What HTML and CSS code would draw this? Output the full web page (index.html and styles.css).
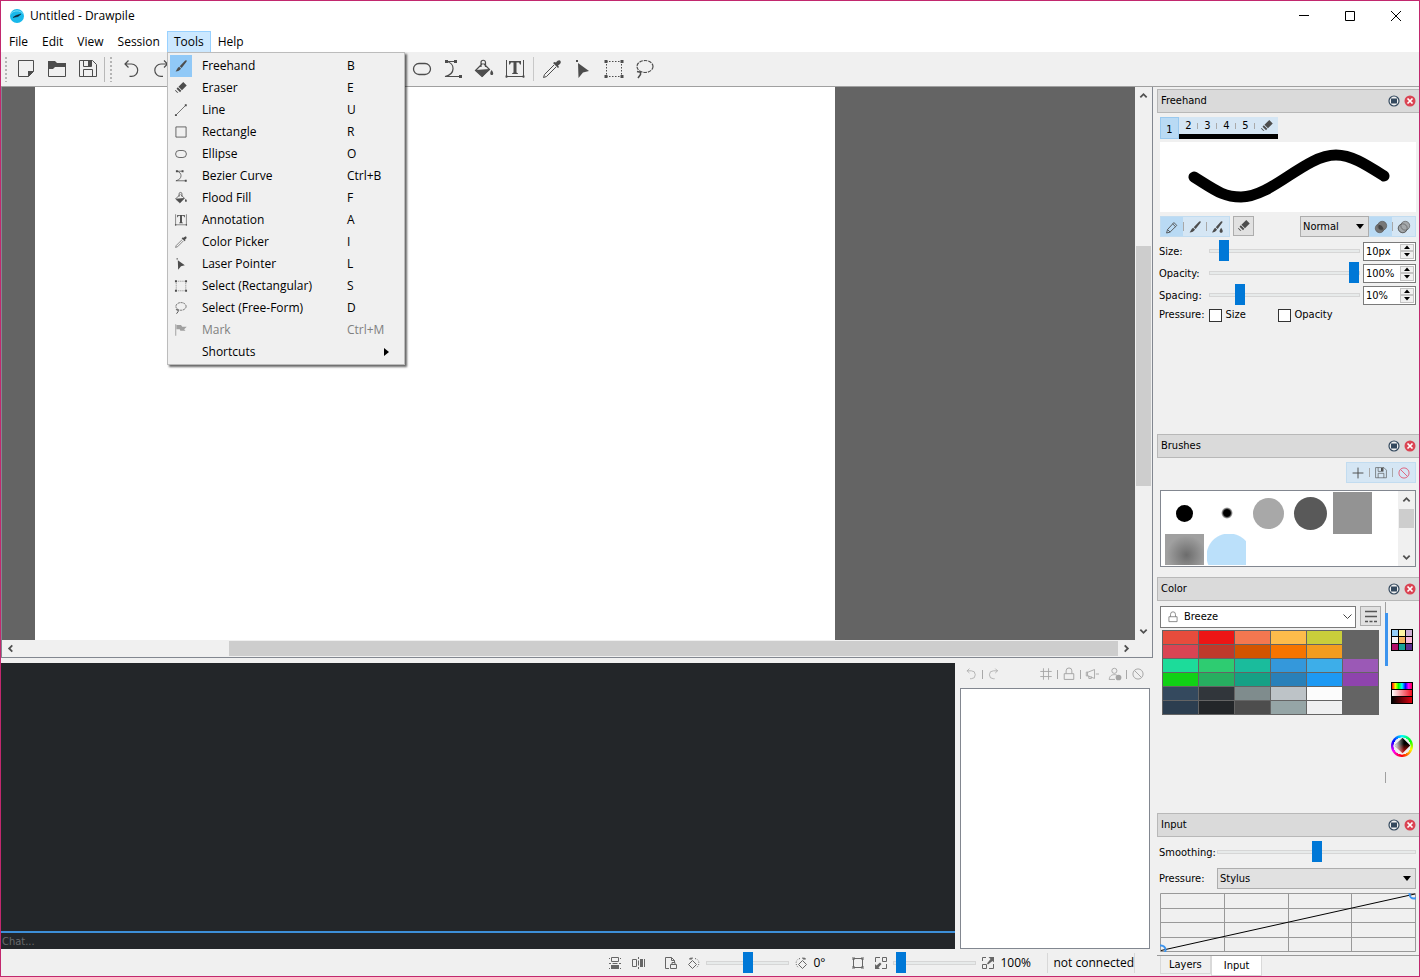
FILE: index.html
```html
<!DOCTYPE html>
<html lang="en">
<head>
    <meta charset="UTF-8">
    <meta name="viewport" content="width=device-width, initial-scale=1.0">
    <title>Untitled - Drawpile</title>
    <link rel="stylesheet" href="styles.css">
</head>
<body>
    <!-- shared icons -->
    <svg class="sprite" width="0" height="0" aria-hidden="true">
        <symbol id="i-new" viewBox="0 0 22 22"><path d="M3.500 2.500h15v11l-5 5h-10z" fill="none" stroke="currentColor"/><path d="M13 19v-6h6z" fill="currentColor"/></symbol>
        <symbol id="i-open" viewBox="0 0 22 22"><path d="M2 3h7l2 2h9v4H9l-2 2H2z" fill="currentColor"/><path d="M2.500 4v14.500h17V6" fill="none" stroke="currentColor"/></symbol>
        <symbol id="i-save" viewBox="0 0 22 22"><path d="M2.500 2.500h13l4 4v12h-17zM6.500 18.500v-7h9v7M6.500 2.500v6h8v-6" fill="none" stroke="currentColor"/><path d="M11 3h3v5h-3z" fill="currentColor"/></symbol>
        <symbol id="i-undo" viewBox="0 0 22 22"><path d="M4.500 6h7a6.200 6.200 0 0 1 0 12.400H9.500M8.500 2.500L5 6l3.500 3.500" fill="none" stroke="currentColor" stroke-width="1.200"/></symbol>
        <symbol id="i-redo" viewBox="0 0 22 22"><path d="M17 6h-7a6.200 6.200 0 0 0 0 12.400h2M13 2.500L16.500 6 13 9.500" fill="none" stroke="currentColor" stroke-width="1.200"/></symbol>
        <symbol id="i-brush" viewBox="0 0 22 22"><path d="M19.500 2c1 1 .5 2-.5 3.200L12 14l-3-2.500 7.500-8C17.500 2.300 18.700 1.300 19.500 2zM8 12.300l3 2.600C9.500 18 6 19.500 2.500 19.500 4.500 17.500 5 14 8 12.300z" fill="currentColor"/></symbol>
        <symbol id="i-eraser" viewBox="0 0 22 22"><path d="M14.500 1.500l5.500 5.500-7.500 7.500L7 9zM6 10l5.500 5.500L9.500 17.500 4 12zM2.500 14l4.500 4.500H5L1.500 15z" fill="currentColor"/></symbol>
        <symbol id="i-line" viewBox="0 0 22 22"><path d="M3.500 18.500l15-15" stroke="currentColor" stroke-width="1.200"/><path d="M1.500 17.500h3v3h-3zM17 2h3v3h-3z" fill="currentColor"/></symbol>
        <symbol id="i-rect" viewBox="0 0 22 22"><path d="M3 3h16v16H3z" fill="none" stroke="currentColor" stroke-width="1.300"/></symbol>
        <symbol id="i-ellipse" viewBox="0 0 22 22"><rect x="2.500" y="5.500" width="17" height="11" rx="5.500" fill="none" stroke="currentColor" stroke-width="1.300"/></symbol>
        <symbol id="i-bezier" viewBox="0 0 22 22"><path d="M4.500 3.500h9M4.500 3.500C13 5 14 16 3 18.500h15" fill="none" stroke="currentColor" stroke-width="1.200"/><path d="M3 2h3v3H3zM12 2h3v3h-3zM17 17h3v3h-3z" fill="currentColor"/></symbol>
        <symbol id="i-fill" viewBox="0 0 22 22"><path d="M8 9V4.500a2 2 0 0 1 4.500 0V9M9.500 5.500L2.500 12.500l6.500 6 7.500-7-6-6" fill="none" stroke="currentColor" stroke-width="1.200"/><path d="M2.500 12l14-1-7 8zM18.500 12c2.500 3 2 5 .3 5s-2.200-2-.3-5z" fill="currentColor"/></symbol>
        <symbol id="i-text" viewBox="0 0 22 22"><path d="M2.500 2v17.500M19.500 2v17.500M2.500 18.500h17" fill="none" stroke="currentColor"/><path d="M1.500 17.500h2v2h-2zM18.500 17.500h2v2h-2z" fill="currentColor"/><path d="M5 3h12v3.500h-1L15 4.500h-2.500v10l1.500 1V16H8v-.5l1.500-1v-10H7L6 6.500H5z" fill="currentColor"/></symbol>
        <symbol id="i-picker" viewBox="0 0 22 22"><path d="M13 7L3.500 16.500l-1 3 3-1L15 9" fill="none" stroke="currentColor"/><path d="M12 5l5 5 1-1-1-1.500c2-1 3.500-3 2.500-4.500s-3-.5-4.500 1.500L13.500 4z" fill="currentColor"/></symbol>
        <symbol id="i-laser" viewBox="0 0 22 22"><path d="M6 5l11 8-6 1.500L6.500 20z" fill="currentColor"/><path d="M4 2h2v2H4z" fill="currentColor"/></symbol>
        <symbol id="i-select" viewBox="0 0 22 22"><path d="M3 3.500h16M3 18.500h16M3.500 3v16M18.500 3v16" stroke="currentColor" stroke-dasharray="1.500 1.500"/><path d="M1.500 2h3v3h-3zM17.500 2h3v3h-3zM1.500 17h3v3h-3zM17.500 17h3v3h-3z" fill="currentColor"/></symbol>
        <symbol id="i-lasso" viewBox="0 0 22 22"><ellipse cx="11" cy="8.500" rx="8" ry="6" fill="none" stroke="currentColor" stroke-width="1.200" stroke-dasharray="3.500 1"/><path d="M3 13.500l3.500.8M6.500 14v2.500L4 20" fill="none" stroke="currentColor" stroke-width="1.500"/></symbol>
        <symbol id="i-flag" viewBox="0 0 22 22"><path d="M2 2h1.500v18H2zM4 3h7l2 3h7l-4 4 2 2H10L9 10H4z" fill="currentColor"/></symbol>
        <symbol id="i-pencil" viewBox="0 0 22 22"><path d="M14 4l4.500 4.500L8 19l-5.500 1.500L4 15zM12 6l4.500 4.500M4 15l4 4" fill="none" stroke="currentColor" stroke-width="1.400"/></symbol>
        <symbol id="i-wet" viewBox="0 0 22 22"><path d="M17.500 2c1 1 .5 2-.5 3.200L10.500 14l-3-2.500 7-8C15.500 2.300 16.700 1.300 17.500 2zM6.500 12.300l3 2.600C8 18 5 19.500 1.500 19.500 3.500 17.500 4 14 6.500 12.300zM16 12c4 5 2.500 8 0 8s-4-3 0-8z" fill="currentColor"/></symbol>
        <symbol id="i-plus" viewBox="0 0 22 22"><path d="M11 2.500v17M2.500 11h17" stroke="currentColor" stroke-width="1.500"/></symbol>
        <symbol id="i-block" viewBox="0 0 22 22"><circle cx="11" cy="11" r="8" fill="none" stroke="currentColor" stroke-width="1.500"/><path d="M5.500 5.500l11 11" stroke="currentColor" stroke-width="1.500"/></symbol>
        <symbol id="i-lock" viewBox="0 0 22 22"><path d="M3.500 10.500h15v9h-15zM6.500 10.500V6a4.500 4.500 0 0 1 9 0v4.500" fill="none" stroke="currentColor" stroke-width="1.500"/></symbol>
        <symbol id="i-hash" viewBox="0 0 22 22"><path d="M7 2v18M15 2v18M2 7h18M2 15h18" stroke="currentColor" stroke-width="1.400"/></symbol>
        <symbol id="i-horn" viewBox="0 0 22 22"><path d="M2 8h3l10-4v14L5 14H2zM6 14v4h4v-3M17 11h5M4 8v6" fill="none" stroke="currentColor" stroke-width="1.400"/></symbol>
        <symbol id="i-user" viewBox="0 0 22 22"><circle cx="10" cy="6" r="4" fill="none" stroke="currentColor" stroke-width="1.400"/><path d="M2 20c0-6 4-8 8-8 3 0 4 1 5 2M2 19.500h9" fill="none" stroke="currentColor" stroke-width="1.400"/><circle cx="16.500" cy="16.500" r="4.500" fill="currentColor"/></symbol>
        <symbol id="i-float" viewBox="0 0 12 12"><circle cx="6" cy="6" r="5" fill="#f0f0f0" stroke="#34495e" stroke-width="1.200"/><path d="M3 3.500h6v5H3z" fill="#34495e"/></symbol>
        <symbol id="i-close" viewBox="0 0 12 12"><circle cx="6" cy="6" r="5.500" fill="#da4453"/><path d="M3.500 3.500l5 5M8.500 3.500l-5 5" stroke="#fff" stroke-width="1.700"/></symbol>
        <symbol id="i-up" viewBox="0 0 10 10"><path d="M1.500 7L5 3.500 8.500 7" fill="none" stroke="#505050" stroke-width="2"/></symbol>
        <symbol id="i-down" viewBox="0 0 10 10"><path d="M1.500 3L5 6.500 8.500 3" fill="none" stroke="#505050" stroke-width="2"/></symbol>
        <symbol id="i-left" viewBox="0 0 10 10"><path d="M7 1.500L3.500 5 7 8.500" fill="none" stroke="#505050" stroke-width="2"/></symbol>
        <symbol id="i-right" viewBox="0 0 10 10"><path d="M3 1.500L6.500 5 3 8.500" fill="none" stroke="#505050" stroke-width="2"/></symbol>
        <symbol id="i-spinup" viewBox="0 0 6 4"><path d="M0 4l3-3.500L6 4z"/></symbol>
        <symbol id="i-spindown" viewBox="0 0 6 4"><path d="M0 0l3 3.500L6 0z"/></symbol>
        <symbol id="i-flip" viewBox="0 0 14 14"><path d="M3.500 1.500h7v4h-7zM1 7.500h2M11 7.500h2M4.500 7.500h5M1 2.500h1M12 2.500h1M1 12.500h1M12 12.500h1" fill="none" stroke="currentColor"/><path d="M3 9h8v4H3z" fill="currentColor"/></symbol>
        <symbol id="i-mirror" viewBox="0 0 14 14"><path d="M1.500 3.500h4v7h-4zM7.500 1v2M7.500 11v2M7.500 4.500v5M13.500 3v8" fill="none" stroke="currentColor"/><path d="M9 3h3v8H9z" fill="currentColor"/></symbol>
        <symbol id="i-pagelock" viewBox="0 0 14 14"><path d="M5 12.500H1.500v-11h6l3 3V6M7.500 1.500v3h3M6.500 8.500h6v4h-6zM8 8.500v-2h3v2" fill="none" stroke="currentColor"/></symbol>
        <symbol id="i-rotleft" viewBox="0 0 14 14"><path d="M5.500 4.500l4 4-4 4-4-4zM4 4V1.500M2 3l4-1" fill="none" stroke="currentColor"/><path d="M8 2.500c5 1 5 7 1 9.500" fill="none" stroke="currentColor" stroke-dasharray="1 1.500"/></symbol>
        <symbol id="i-rotright" viewBox="0 0 14 14"><path d="M8.500 4.500l4 4-4 4-4-4zM10 4V1.500M12 3L8 2" fill="none" stroke="currentColor"/><path d="M6 2.500C1 3.500 1 9.500 5 12" fill="none" stroke="currentColor" stroke-dasharray="1 1.500"/></symbol>
        <symbol id="i-fit" viewBox="0 0 14 14"><path d="M1 1h3v3H1zM10 1h3v3h-3zM1 10h3v3H1zM10 10h3v3h-3z" fill="#aaa"/><path d="M2.500 2.500h9v9h-9z" fill="none" stroke="currentColor"/></symbol>
        <symbol id="i-zoomout" viewBox="0 0 14 14"><path d="M6 1.500H1.500V6M8.500 1.500h4v4h-4zM12.500 8v4.500H8" fill="none" stroke="currentColor"/><path d="M1 13V8l1.500 1.500L6 6.500 7.500 8l-3 3.500L6 13z" fill="currentColor"/></symbol>
        <symbol id="i-zoomin" viewBox="0 0 14 14"><path d="M5 1.500H1.500V5M1.500 8.500h4v4h-4zM12.500 8v4.500H8" fill="none" stroke="currentColor"/><path d="M7.500 1H13v5.500L11.500 5 7 8.500 6 7.500 9.500 3z" fill="currentColor"/></symbol>
    </svg>

    <div class="window">
        <header class="titlebar">
            <svg class="logo" viewBox="0 0 14 14"><circle cx="7" cy="7" r="7" fill="#18b8ea"/><path d="M1 4.500C4 1 10 1 13 4.500" fill="none" stroke="#7fe0fa"/><path d="M3 8.500l3-2 5-1.500-3 2.500z" fill="#123" stroke="#123" stroke-width=".5"/></svg>
            <h1>Untitled - Drawpile</h1>
            <div class="window-buttons">
                <button type="button" aria-label="Minimize"><svg viewBox="0 0 10 10"><path d="M0 4.500h10" stroke="#000"/></svg></button>
                <button type="button" aria-label="Maximize"><svg viewBox="0 0 10 10"><path d="M.5.500h9v9h-9z" fill="none" stroke="#000"/></svg></button>
                <button type="button" aria-label="Close"><svg viewBox="0 0 10 10"><path d="M0 0l10 10M10 0L0 10" stroke="#000"/></svg></button>
            </div>
        </header>

        <nav class="menubar">
            <button type="button">File</button>
            <button type="button">Edit</button>
            <button type="button">View</button>
            <button type="button">Session</button>
            <div class="menu-holder">
                <button type="button" class="open">Tools</button>
                <div class="menu" role="menu">
                    <button type="button" role="menuitem" class="checked"><svg><use href="#i-brush"/></svg><span>Freehand</span><kbd>B</kbd></button>
                    <button type="button" role="menuitem"><svg><use href="#i-eraser"/></svg><span>Eraser</span><kbd>E</kbd></button>
                    <button type="button" role="menuitem"><svg><use href="#i-line"/></svg><span>Line</span><kbd>U</kbd></button>
                    <button type="button" role="menuitem"><svg><use href="#i-rect"/></svg><span>Rectangle</span><kbd>R</kbd></button>
                    <button type="button" role="menuitem"><svg><use href="#i-ellipse"/></svg><span>Ellipse</span><kbd>O</kbd></button>
                    <button type="button" role="menuitem"><svg><use href="#i-bezier"/></svg><span>Bezier Curve</span><kbd>Ctrl+B</kbd></button>
                    <button type="button" role="menuitem"><svg><use href="#i-fill"/></svg><span>Flood Fill</span><kbd>F</kbd></button>
                    <button type="button" role="menuitem"><svg><use href="#i-text"/></svg><span>Annotation</span><kbd>A</kbd></button>
                    <button type="button" role="menuitem"><svg><use href="#i-picker"/></svg><span>Color Picker</span><kbd>I</kbd></button>
                    <button type="button" role="menuitem"><svg><use href="#i-laser"/></svg><span>Laser Pointer</span><kbd>L</kbd></button>
                    <button type="button" role="menuitem"><svg><use href="#i-select"/></svg><span>Select (Rectangular)</span><kbd>S</kbd></button>
                    <button type="button" role="menuitem"><svg><use href="#i-lasso"/></svg><span>Select (Free-Form)</span><kbd>D</kbd></button>
                    <button type="button" role="menuitem" disabled><svg><use href="#i-flag"/></svg><span>Mark</span><kbd>Ctrl+M</kbd></button>
                    <button type="button" role="menuitem"><i></i><span>Shortcuts</span><svg class="submenu" viewBox="0 0 5 8"><path d="M0 0l5 4-5 4z"/></svg></button>
                </div>
            </div>
            <button type="button">Help</button>
        </nav>

        <div class="toolbar">
            <div class="tool-group">
                <button type="button" aria-label="New"><svg><use href="#i-new"/></svg></button>
                <button type="button" aria-label="Open"><svg><use href="#i-open"/></svg></button>
                <button type="button" aria-label="Save"><svg><use href="#i-save"/></svg></button>
            </div>
            <div class="tool-group edit">
                <button type="button" aria-label="Undo"><svg><use href="#i-undo"/></svg></button>
                <button type="button" aria-label="Redo"><svg><use href="#i-redo"/></svg></button>
            </div>
            <div class="tool-group">
                <button type="button" aria-label="Freehand"><svg><use href="#i-brush"/></svg></button>
                <button type="button" aria-label="Eraser"><svg><use href="#i-eraser"/></svg></button>
                <button type="button" aria-label="Line"><svg><use href="#i-line"/></svg></button>
                <button type="button" aria-label="Rectangle"><svg><use href="#i-rect"/></svg></button>
                <button type="button" aria-label="Ellipse"><svg><use href="#i-ellipse"/></svg></button>
                <button type="button" aria-label="Bezier Curve"><svg><use href="#i-bezier"/></svg></button>
                <button type="button" aria-label="Flood Fill"><svg><use href="#i-fill"/></svg></button>
                <button type="button" aria-label="Annotation"><svg><use href="#i-text"/></svg></button>
                <span class="tool-sep"></span>
                <button type="button" aria-label="Color Picker"><svg><use href="#i-picker"/></svg></button>
                <button type="button" aria-label="Laser Pointer"><svg><use href="#i-laser"/></svg></button>
                <button type="button" aria-label="Select (Rectangular)"><svg><use href="#i-select"/></svg></button>
                <button type="button" aria-label="Select (Free-Form)"><svg><use href="#i-lasso"/></svg></button>
            </div>
        </div>

        <div class="main">
            <div class="left">
                <div class="view">
                    <div class="canvas"><div class="paper"></div></div>
                    <div class="vscroll">
                        <svg><use href="#i-up"/></svg>
                        <div class="track"><div class="thumb"></div></div>
                        <svg><use href="#i-down"/></svg>
                    </div>
                    <div class="hscroll">
                        <svg><use href="#i-left"/></svg>
                        <div class="track"><div class="thumb"></div></div>
                        <svg><use href="#i-right"/></svg>
                    </div>
                </div>

                <div class="session">
                    <div class="chat">
                        <div class="chat-log"></div>
                        <input type="text" placeholder="Chat..." aria-label="Chat">
                    </div>
                    <div class="users">
                        <div class="user-tools">
                            <button type="button" aria-label="Undo"><svg><use href="#i-undo"/></svg></button><hr>
                            <button type="button" aria-label="Redo"><svg><use href="#i-redo"/></svg></button>
                            <span class="fill"></span>
                            <button type="button" aria-label="Operator"><svg><use href="#i-hash"/></svg></button><hr>
                            <button type="button" aria-label="Lock"><svg><use href="#i-lock"/></svg></button><hr>
                            <button type="button" aria-label="Mute"><svg><use href="#i-horn"/></svg></button>
                            <button type="button" class="kick" aria-label="Kick"><svg><use href="#i-user"/></svg></button><hr>
                            <button type="button" aria-label="Ban"><svg><use href="#i-block"/></svg></button>
                        </div>
                        <div class="user-list"></div>
                    </div>
                </div>

                <footer class="status">
                    <button type="button" aria-label="Flip"><svg><use href="#i-flip"/></svg></button>
                    <button type="button" aria-label="Mirror"><svg><use href="#i-mirror"/></svg></button>
                    <button type="button" class="apart" aria-label="Lock rotation"><svg><use href="#i-pagelock"/></svg></button>
                    <button type="button" aria-label="Rotate left"><svg><use href="#i-rotleft"/></svg></button>
                    <input type="range" min="-180" max="180" value="0" aria-label="Rotation">
                    <button type="button" aria-label="Rotate right"><svg><use href="#i-rotright"/></svg></button>
                    <output class="angle">0°</output>
                    <button type="button" aria-label="Fit"><svg><use href="#i-fit"/></svg></button>
                    <button type="button" aria-label="Zoom out"><svg><use href="#i-zoomout"/></svg></button>
                    <input type="range" min="50" max="1600" value="90" aria-label="Zoom">
                    <button type="button" aria-label="Zoom in"><svg><use href="#i-zoomin"/></svg></button>
                    <output class="zoom">100%</output>
                    <span class="connection">not connected</span>
                </footer>
            </div>

            <aside class="docks">
                <section class="dock">
                    <div class="dock-title"><h2>Freehand</h2><button type="button" aria-label="Float"><svg><use href="#i-float"/></svg></button><button type="button" aria-label="Close"><svg><use href="#i-close"/></svg></button></div>
                    <div class="dock-body brush-dock">
                        <div class="slots">
                            <button type="button" class="current">1</button>
                            <button type="button">2</button>
                            <button type="button">3</button>
                            <button type="button">4</button>
                            <button type="button">5</button>
                            <button type="button" aria-label="Eraser slot"><svg><use href="#i-eraser"/></svg></button>
                        </div>
                        <svg class="preview" viewBox="0 0 256 70" preserveAspectRatio="none"><path d="M34 35C55 48 63 55 81 55C112 55 145 13 176 13C191 13 205 22 224 34" fill="none" stroke="#000" stroke-width="11" stroke-linecap="round"/></svg>
                        <div class="modes">
                            <div class="button-strip">
                                <button type="button" class="on" aria-label="Hard edge"><svg><use href="#i-pencil"/></svg></button><hr>
                                <button type="button" aria-label="Soft edge"><svg><use href="#i-brush"/></svg></button><hr>
                                <button type="button" aria-label="Watercolor"><svg><use href="#i-wet"/></svg></button>
                            </div>
                            <button type="button" class="push" aria-label="Eraser mode"><svg><use href="#i-eraser"/></svg></button>
                            <span class="fill"></span>
                            <select class="combo blend" aria-label="Blend mode"><option>Normal</option></select>
                            <div class="button-strip">
                                <button type="button" class="on" aria-label="Incremental"><svg viewBox="0 0 22 22"><circle cx="9" cy="13" r="7" fill="#777" stroke="#555"/><circle cx="13" cy="9" r="7" fill="#777" stroke="#555"/><path d="M7 9c0-1 5-3 8 5-4 3-9 1-8-5z" fill="#444"/></svg></button><hr>
                                <button type="button" aria-label="Direct"><svg viewBox="0 0 22 22"><circle cx="9" cy="13" r="7" fill="#a4a8ab" stroke="#555"/><circle cx="13" cy="9" r="7" fill="#a4a8ab" stroke="#555"/><circle cx="9" cy="13" r="7" fill="none" stroke="#555"/></svg></button>
                            </div>
                        </div>
                        <div class="setting">
                            <label for="size">Size:</label>
                            <input type="range" id="size" min="1" max="128" value="9">
                            <div class="spin"><input type="text" value="10px" aria-label="Size value"><span><button type="button" aria-label="Increase size"><svg><use href="#i-spinup"/></svg></button><button type="button" aria-label="Decrease size"><svg><use href="#i-spindown"/></svg></button></span></div>
                        </div>
                        <div class="setting">
                            <label for="opacity">Opacity:</label>
                            <input type="range" id="opacity" value="100">
                            <div class="spin"><input type="text" value="100%" aria-label="Opacity value"><span><button type="button" aria-label="Increase opacity"><svg><use href="#i-spinup"/></svg></button><button type="button" aria-label="Decrease opacity"><svg><use href="#i-spindown"/></svg></button></span></div>
                        </div>
                        <div class="setting">
                            <label for="spacing">Spacing:</label>
                            <input type="range" id="spacing" value="18">
                            <div class="spin"><input type="text" value="10%" aria-label="Spacing value"><span><button type="button" aria-label="Increase spacing"><svg><use href="#i-spinup"/></svg></button><button type="button" aria-label="Decrease spacing"><svg><use href="#i-spindown"/></svg></button></span></div>
                        </div>
                        <div class="pressure">
                            <span>Pressure:</span>
                            <label><input type="checkbox">Size</label>
                            <label><input type="checkbox">Opacity</label>
                        </div>
                    </div>
                </section>

                <section class="dock">
                    <div class="dock-title"><h2>Brushes</h2><button type="button" aria-label="Float"><svg><use href="#i-float"/></svg></button><button type="button" aria-label="Close"><svg><use href="#i-close"/></svg></button></div>
                    <div class="dock-body">
                        <div class="button-strip brush-tools">
                            <button type="button" aria-label="Add brush"><svg><use href="#i-plus"/></svg></button><hr>
                            <button type="button" aria-label="Save brush"><svg><use href="#i-save"/></svg></button><hr>
                            <button type="button" class="delete" aria-label="Delete brush"><svg><use href="#i-block"/></svg></button>
                        </div>
                        <div class="brush-list">
                            <div class="brushes">
                                <span><i class="dot hard"></i></span>
                                <span><i class="dot soft"></i></span>
                                <span><i class="dot light"></i></span>
                                <span><i class="dot dark"></i></span>
                                <span class="flat"></span>
                                <span class="smudge"></span>
                                <span class="blue"></span>
                            </div>
                            <div class="vscroll">
                                <svg><use href="#i-up"/></svg>
                                <div class="track"><div class="thumb"></div></div>
                                <svg><use href="#i-down"/></svg>
                            </div>
                        </div>
                    </div>
                </section>

                <section class="dock">
                    <div class="dock-title"><h2>Color</h2><button type="button" aria-label="Float"><svg><use href="#i-float"/></svg></button><button type="button" aria-label="Close"><svg><use href="#i-close"/></svg></button></div>
                    <div class="color-dock">
                        <div class="color-page">
                            <div class="palette-bar">
                                <div class="palette-select">
                                    <svg><use href="#i-lock"/></svg>
                                    <select aria-label="Palette"><option>Breeze</option></select>
                                </div>
                                <button type="button" class="push" aria-label="Palette menu"><svg viewBox="0 0 14 14"><path d="M1 2.500h12M1 7.500h12" stroke="#555" stroke-width="1.500"/><path d="M1 12.500h12" stroke="#555" stroke-width="1.500" stroke-dasharray="3 1.500"/></svg></button>
                            </div>
                            <div class="palette">
                                <i class="c1"></i><i class="c2"></i><i class="c3"></i><i class="c4"></i><i class="c5"></i><i></i>
                                <i class="c6"></i><i class="c7"></i><i class="c8"></i><i class="c9"></i><i class="c10"></i><i></i>
                                <i class="c11"></i><i class="c12"></i><i class="c13"></i><i class="c14"></i><i class="c15"></i><i class="c16"></i>
                                <i class="c17"></i><i class="c18"></i><i class="c19"></i><i class="c20"></i><i class="c21"></i><i class="c22"></i>
                                <i class="c23"></i><i class="c24"></i><i class="c25"></i><i class="c26"></i><i class="c27"></i><i></i>
                                <i class="c28"></i><i class="c29"></i><i class="c30"></i><i class="c31"></i><i class="c32"></i><i></i>
                            </div>
                        </div>
                        <div class="color-tabs">
                            <button type="button" class="active" aria-label="Palette">
                                <svg viewBox="0 0 22 22"><path d="M0 0h22v22H0z"/><path d="M1 1h6v6H1z" fill="#93cdf9"/><path d="M8 1h6v6H8z" fill="#fdf6a0"/><path d="M15 1h6v6h-6z" fill="#cbaed2"/><path d="M1 8h6v6H1z" fill="#f6f3f8"/><path d="M8 8h6v6H8z" fill="#f6b560"/><path d="M15 8h6v6h-6z" fill="#f8b8d8"/><path d="M1 15h6v6H1z" fill="#b00e68"/><path d="M8 15h6v6H8z" fill="#18a298"/><path d="M15 15h6v6h-6z" fill="#5b2d90"/></svg>
                            </button>
                            <button type="button" aria-label="Sliders">
                                <svg viewBox="0 0 22 22"><defs><linearGradient id="hue"><stop offset="0" stop-color="red"/><stop offset=".17" stop-color="#ff0"/><stop offset=".33" stop-color="#0f0"/><stop offset=".5" stop-color="#0ff"/><stop offset=".67" stop-color="#00f"/><stop offset=".83" stop-color="#f0f"/><stop offset="1" stop-color="#f04"/></linearGradient><linearGradient id="sat"><stop offset="0" stop-color="#fff"/><stop offset="1" stop-color="#f01020"/></linearGradient><linearGradient id="val"><stop offset="0"/><stop offset="1" stop-color="#e00010"/></linearGradient></defs><path d="M0 0h22v22H0z"/><path d="M1 1h20v6H1z" fill="url(#hue)"/><path d="M1 8h20v6H1z" fill="url(#sat)"/><path d="M1 15h20v6H1z" fill="url(#val)"/></svg>
                            </button>
                            <button type="button" aria-label="Wheel"><span class="wheel"><i></i></span></button>
                        </div>
                    </div>
                </section>

                <section class="dock">
                    <div class="dock-title"><h2>Input</h2><button type="button" aria-label="Float"><svg><use href="#i-float"/></svg></button><button type="button" aria-label="Close"><svg><use href="#i-close"/></svg></button></div>
                    <div class="dock-body input-dock">
                        <label for="smoothing">Smoothing:</label>
                        <input type="range" id="smoothing" value="50">
                        <label for="source">Pressure:</label>
                        <select id="source" class="combo"><option>Stylus</option></select>
                        <svg class="curve" viewBox="0 0 256 59" preserveAspectRatio="none"><path d="M.5.500h255v58H.5zM64.500 0v59M128.500 0v59M191.500 0v59M0 15.500h256M0 29.500h256M0 44.500h256" fill="none" stroke="#999"/><path d="M1 57.500L255 1" stroke="#000"/><circle cx="1" cy="57" r="4.500" fill="none" stroke="#3d94ee" stroke-width="2"/><circle cx="254" cy="1" r="4.500" fill="none" stroke="#3d94ee" stroke-width="2"/></svg>
                    </div>
                    <div class="dock-tabs">
                        <button type="button">Layers</button>
                        <button type="button" class="selected">Input</button>
                    </div>
                </section>
            </aside>
        </div>
    </div>
</body>
</html>
```
FILE: styles.css
```css
* {
    box-sizing: border-box;
}

body {
    margin: 0;
    font-family: "DejaVu Sans Condensed", Roboto, sans-serif;
    font-size: 11px;
    line-height: 14px;
    color: #000;
}

button, input, select, kbd, output {
    font: inherit;
    color: inherit;
}

button {
    padding: 0;
    border: none;
    background: none;
    display: flex;
    align-items: center;
    justify-content: center;
}

h1, h2 {
    margin: 0;
    font: inherit;
}

.sprite {
    position: absolute;
}

.fill {
    flex: 1;
}

.window {
    display: flex;
    flex-direction: column;
    height: 100vh;
    border: 1px solid #c2286e;
    background: #f0f0f0;
}

/* title and menus */
.titlebar {
    display: flex;
    align-items: center;
    height: 30px;
    padding-left: 9px;
    gap: 6px;
    background: #fff;
    font-family: "Open Sans", sans-serif;
    font-size: 12px;
}

.logo {
    width: 14px;
    height: 14px;
}

.window-buttons {
    display: flex;
    margin-left: auto;
}

.window-buttons button {
    width: 46px;
    height: 28px;
}

.window-buttons svg {
    width: 10px;
    height: 10px;
}

.menubar {
    display: flex;
    height: 21px;
    padding-left: 1px;
    background: #fff;
    font-family: "Open Sans", sans-serif;
    font-size: 12px;
}

.menubar > button {
    height: 21px;
    padding: 0 7px;
}

.menu-holder {
    position: relative;
}

.menubar .open {
    height: 21px;
    padding: 0 6px;
    border: 1px solid #99d1ff;
    border-bottom: none;
    background: #cce8ff;
}

.menu {
    position: absolute;
    z-index: 2;
    top: 21px;
    left: 0;
    width: 238px;
    padding: 2px 2px 1px;
    border: 1px solid #bcbcbc;
    background: #f0f0f0;
    box-shadow: 2px 2px 2px rgba(0, 0, 0, 0.6);
}

.menu button {
    display: grid;
    grid-template-columns: 22px 135px 1fr;
    column-gap: 10px;
    width: 100%;
    height: 22px;
    text-align: left;
}

.menu svg {
    width: 22px;
    height: 22px;
    padding: 4px;
    color: #4d4d4d;
}

.menu .checked svg {
    background: #91c9f7;
}

.menu button:disabled {
    color: #808080;
}

.menu button:disabled svg {
    color: #a0a0a0;
}

.menu .submenu {
    width: 5px;
    height: 8px;
    padding: 0;
    margin-left: 37px;
}

/* toolbar */
.toolbar {
    display: flex;
    align-items: center;
    height: 35px;
    padding-left: 4px;
    border-bottom: 1px solid #a0a0a0;
}

.tool-group {
    display: flex;
    align-items: center;
    gap: 9px;
}

.tool-group::before {
    content: "";
    width: 2px;
    height: 25px;
    margin-right: -1px;
    background: repeating-linear-gradient(#b4b4b4 0 2px, transparent 2px 4px);
}

.tool-group + .tool-group {
    margin-left: 5px;
    padding-left: 5px;
    border-left: 1px solid #b8b8b8;
}

.tool-group.edit {
    margin-right: 93px;
}

.tool-group button, .tool-group svg {
    width: 22px;
    height: 22px;
    color: #4d4d4d;
}

.tool-sep {
    width: 1px;
    height: 24px;
    margin: 0 -2px;
    background: #c8c8c8;
}

/* main area */
.main {
    flex: 1;
    display: grid;
    grid-template-columns: 1fr 262px;
    column-gap: 4px;
    min-height: 0;
}

.left {
    display: flex;
    flex-direction: column;
    min-width: 0;
}

.view {
    flex: 570;
    display: grid;
    grid-template-columns: 1fr 17px;
    grid-template-rows: 1fr 17px;
    border: 1px solid #828790;
    border-top: none;
    background: #f0f0f0;
}

.canvas {
    display: flex;
    padding-left: 33px;
    background: #646464;
}

.paper {
    width: 800px;
    background: #fff;
}

.vscroll, .hscroll {
    display: flex;
    align-items: center;
    background: #f0f0f0;
}

.vscroll {
    flex-direction: column;
}

.vscroll svg, .hscroll svg {
    width: 17px;
    height: 17px;
    padding: 4px;
}

.track {
    flex: 1;
}

.vscroll .track {
    width: 15px;
    padding-top: 142px;
}

.vscroll .thumb {
    height: 240px;
    background: #cdcdcd;
}

.hscroll .track {
    padding-left: 210px;
}

.hscroll .thumb {
    height: 15px;
    background: #cdcdcd;
}

.session {
    flex: 286;
    display: flex;
    gap: 5px;
    padding: 5px 3px 0 0;
}

.chat {
    flex: 1;
    display: flex;
    flex-direction: column;
    background: #232629;
}

.chat-log {
    flex: 1;
    border-bottom: 2px solid #3d8fd8;
}

.chat input {
    height: 16px;
    padding: 0 1px;
    border: none;
    background: #232629;
    color: #fff;
}

.chat input::placeholder {
    color: #6a6c6e;
}

.users {
    width: 190px;
    display: flex;
    flex-direction: column;
}

.user-tools {
    display: flex;
    align-items: center;
    height: 25px;
    padding: 0 5px 3px 4px;
}

.user-tools button {
    color: #a4a4a4;
}

.user-tools svg {
    width: 14px;
    height: 14px;
}

.user-tools .kick {
    margin-left: 9px;
}

hr {
    width: 1px;
    height: 9px;
    margin: 0 4px;
    border: none;
    background: #a8a8a8;
}

.user-list {
    flex: 1;
    border: 1px solid #828790;
    background: #fff;
}

.status {
    display: flex;
    align-items: center;
    justify-content: flex-end;
    gap: 9px;
    height: 27px;
    padding-right: 18px;
    font-family: "Open Sans", sans-serif;
    font-size: 12px;
}

.status svg {
    width: 14px;
    height: 14px;
    color: #666;
}

.status .apart {
    margin-left: 10px;
}

.status input {
    width: 83px;
    margin: 0 -4px;
}

.angle {
    width: 29px;
    margin-left: -4px;
}

.zoom {
    width: 38px;
    margin-left: -4px;
}

.connection {
    padding: 3px 0 3px 5px;
    border: solid #d8d8d8;
    border-width: 0 1px;
}

/* sliders */
input[type="range"] {
    appearance: none;
    min-width: 0;
    height: 22px;
    background: none;
}

input[type="range"]::-webkit-slider-runnable-track {
    height: 4px;
    border: 1px solid #d6d6d6;
    background: #e7eaea;
}

input[type="range"]::-webkit-slider-thumb {
    appearance: none;
    width: 10px;
    height: 21px;
    margin-top: -10px;
    background: #0078d7;
}

/* docks */
.docks {
    display: grid;
    grid-template-rows: 345fr 143fr 236fr 163fr;
    padding-top: 2px;
    min-height: 0;
}

.dock {
    display: flex;
    flex-direction: column;
    min-height: 0;
}

.dock-title {
    display: flex;
    align-items: center;
    gap: 4px;
    height: 24px;
    padding: 0 3px;
    border: 1px solid #b8b8b8;
    border-right: none;
    background: #dadada;
}

.dock-title h2 {
    flex: 1;
}

.dock-title svg {
    width: 12px;
    height: 12px;
}

.dock-body {
    display: flex;
    flex-direction: column;
    padding: 4px 3px 0;
}

.slots {
    display: flex;
    align-self: flex-start;
    height: 22px;
    background: #d5e6f4;
}

.slots button {
    width: 19px;
    border-bottom: 5px solid #000;
    background: linear-gradient(#aaa, #aaa) right center / 1px 6px no-repeat;
}

.slots button:last-child {
    width: 23px;
    background: none;
}

.slots .current {
    padding-top: 4px;
    border: 1px solid #99c9ef;
    background: #b9daf4;
}

.slots svg, .modes svg, .brush-tools svg {
    width: 14px;
    height: 14px;
    color: #4d4d4d;
}

.preview {
    width: 100%;
    height: 70px;
    margin: 3px 0 4px;
    background: #fff;
}

.modes {
    display: flex;
    height: 21px;
    margin-bottom: 3px;
}

.button-strip {
    display: flex;
    align-items: center;
    height: 21px;
    border: 1px solid #c2dcf0;
    background: #d5e6f4;
}

.button-strip button {
    width: 22px;
    height: 19px;
}

.button-strip hr {
    margin: 0;
}

.button-strip .on {
    background: #b9daf4;
}

.push {
    width: 21px;
    height: 20px;
    border: 1px solid #adadad;
    background: #e1e1e1;
}

.modes .push {
    margin-left: 3px;
}

.combo {
    appearance: none;
    height: 21px;
    padding: 1px 2px 0;
    border: 1px solid #adadad;
    border-radius: 0;
    background: #e1e1e1 url("data:image/svg+xml,%3Csvg xmlns='http://www.w3.org/2000/svg' width='8' height='5'%3E%3Cpath d='M0 0h8L4 5z'/%3E%3C/svg%3E") no-repeat right 4px center;
}

.blend {
    width: 69px;
}

.setting {
    display: grid;
    grid-template-columns: 46px 1fr 53px;
    column-gap: 3px;
    align-items: center;
    height: 22px;
}

.setting label, .input-dock label {
    margin-left: -1px;
    padding-top: 2px;
}

.pressure > span {
    margin-left: -1px;
}

.setting input[type="range"] {
    margin: 0;
}

.spin {
    display: flex;
    height: 19px;
    border: 1px solid #7a7a7a;
    background: #fff;
}

.spin input {
    flex: 1;
    min-width: 0;
    padding: 1px 2px 0;
    border: none;
    background: none;
}

.spin span {
    display: flex;
    flex-direction: column;
    width: 14px;
    margin: 1px;
}

.spin button {
    flex: 1;
    border: 1px solid #c4c4c4;
    background: #f0f0f0;
}

.spin svg {
    width: 6px;
    height: 4px;
}

.pressure {
    display: flex;
    align-items: center;
    height: 16px;
    margin-top: 1px;
}

.pressure label {
    display: flex;
    align-items: center;
    width: 69px;
    margin-left: 4px;
}

.pressure label + label {
    margin-left: 0;
}

.pressure input {
    appearance: none;
    width: 13px;
    height: 13px;
    margin: 0 4px 0 0;
    border: 1px solid #333;
    background: #fff;
}

.brush-tools {
    align-self: flex-end;
}

.brush-tools .delete svg {
    color: #e0607a;
}

.brush-list {
    display: flex;
    height: 77px;
    margin-top: 7px;
    border: 1px solid #828790;
    background: #fff;
}

.brushes {
    flex: 1;
    display: grid;
    grid-template-columns: repeat(auto-fill, 39px);
    grid-auto-rows: 42px;
    column-gap: 3px;
    padding: 1px 0 0 4px;
    border-bottom: 1px solid #fff;
    overflow: hidden;
}

.brushes span {
    display: grid;
    place-items: center;
}

.dot {
    border-radius: 50%;
}

.hard {
    width: 17px;
    height: 17px;
    background: #000;
}

.soft {
    width: 12px;
    height: 12px;
    background: radial-gradient(#000 40%, transparent 70%);
}

.light {
    width: 31px;
    height: 31px;
    background: #a8a8a8;
}

.dark {
    width: 33px;
    height: 33px;
    background: #595959;
}

.flat {
    background: #939393;
}

.smudge {
    background: radial-gradient(circle at 55% 50%, #6c6c6c, #a0a0a0 65%);
}

.blue {
    background: radial-gradient(circle at 22px 22px, #bbe0fa 22px, transparent 23px);
}

.brush-list .vscroll .track {
    padding-top: 1px;
}

.brush-list .vscroll .thumb {
    height: 19px;
}

.color-dock {
    flex: 1;
    display: flex;
    padding: 1px 0 0 3px;
}

.color-page {
    flex: 1;
    padding: 4px 4px 0 0;
}

.palette-bar {
    display: flex;
    gap: 4px;
}

.palette-select {
    flex: 1;
    display: flex;
    align-items: center;
    height: 22px;
    padding-left: 6px;
    border: 1px solid #7a7a7a;
    background: #fff;
}

.palette-select svg {
    width: 12px;
    height: 12px;
    color: #777;
}

.palette-select select {
    flex: 1;
    appearance: none;
    height: 20px;
    padding: 0 5px;
    border: none;
    background: url("data:image/svg+xml,%3Csvg xmlns='http://www.w3.org/2000/svg' width='9' height='6'%3E%3Cpath d='M.5.5l4 4 4-4' fill='none' stroke='%23444'/%3E%3C/svg%3E") no-repeat right 3px center;
}

.palette-bar .push svg {
    width: 14px;
    height: 14px;
}

.palette {
    display: grid;
    grid-template-columns: repeat(6, 1fr);
    grid-auto-rows: 13px;
    gap: 1px;
    margin: 2px;
    padding: 1px;
    background: #646464;
}

.c1 { background: #e74c3c; }
.c2 { background: #ed1515; }
.c3 { background: #f47750; }
.c4 { background: #fdbc4b; }
.c5 { background: #c9ce3b; }
.c6 { background: #da4453; }
.c7 { background: #c0392b; }
.c8 { background: #d35400; }
.c9 { background: #f67400; }
.c10 { background: #f39c1f; }
.c11 { background: #1cdc9a; }
.c12 { background: #2ecc71; }
.c13 { background: #1abc9c; }
.c14 { background: #3498db; }
.c15 { background: #3daee9; }
.c16 { background: #9b59b6; }
.c17 { background: #11d116; }
.c18 { background: #27ae60; }
.c19 { background: #16a085; }
.c20 { background: #2980b9; }
.c21 { background: #1d99f3; }
.c22 { background: #8e44ad; }
.c23 { background: #34495e; }
.c24 { background: #31363b; }
.c25 { background: #7f8c8d; }
.c26 { background: #bdc3c7; }
.c27 { background: #fcfcfc; }
.c28 { background: #2c3e50; }
.c29 { background: #232629; }
.c30 { background: #4d4d4d; }
.c31 { background: #95a5a6; }
.c32 { background: #eff0f1; }

.color-tabs {
    width: 34px;
}

.color-tabs::before, .color-tabs::after {
    content: "";
    display: block;
    width: 1px;
    height: 11px;
    background: #a0a0a0;
}

.color-tabs button {
    width: 31px;
    height: 53px;
    border-left: 3px solid transparent;
}

.color-tabs .active {
    border-color: #3d94ee;
}

.color-tabs svg {
    width: 22px;
    height: 22px;
}

.wheel {
    display: grid;
    place-items: center;
    width: 22px;
    height: 22px;
    border-radius: 50%;
    background: radial-gradient(#f0f0f0 54%, transparent 56%), conic-gradient(#0ff, #0f0 60deg, #ff0 110deg, #f00 180deg, #f0f 240deg, #00f 300deg, #0ff);
}

.wheel i {
    width: 11px;
    height: 11px;
    transform: rotate(45deg);
    background: linear-gradient(45deg, #eee, transparent 60%), linear-gradient(315deg, #e01010, #000 60%);
}

.input-dock {
    flex: 1;
    display: grid;
    grid-template-columns: 57px 1fr;
    grid-template-rows: 22px 22px 59px;
    row-gap: 4px;
    align-items: center;
}

.input-dock input {
    margin: 0;
}

.curve {
    grid-column: 1 / 3;
    width: 100%;
    height: 59px;
}

.dock-tabs {
    display: flex;
    align-items: flex-start;
    height: 21px;
    padding-left: 3px;
    border-top: 1px solid #999;
}

.dock-tabs button {
    height: 18px;
    padding: 0 8px;
    border: 1px solid #d9d9d9;
    border-top: none;
}

.dock-tabs .selected {
    height: 20px;
    padding: 0 12px;
    background: #fff;
}
```
